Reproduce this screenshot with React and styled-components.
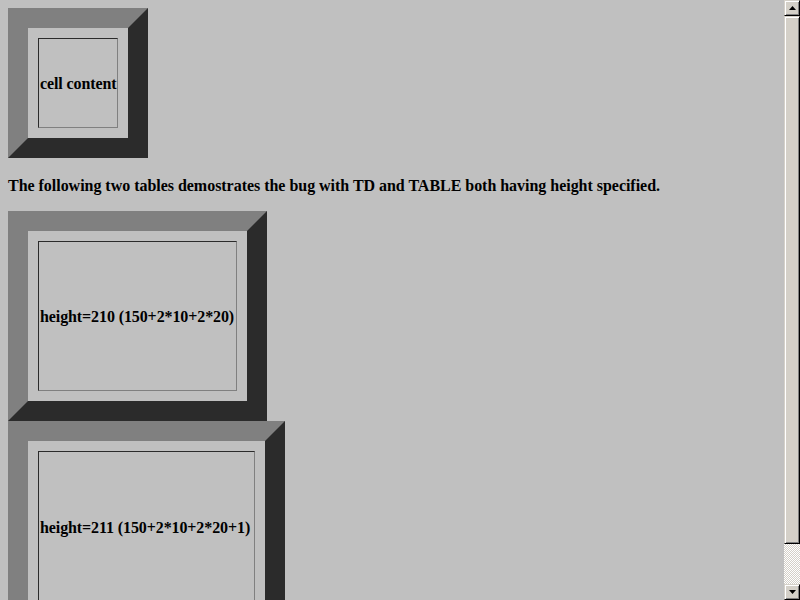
import React from 'react';
import styled, { createGlobalStyle } from 'styled-components';

const GlobalStyle = createGlobalStyle`
  html, body {
    margin: 0;
    padding: 0;
    overflow: hidden;
    background: #c0c0c0;
  }
  body {
    padding: 8px;
    font-family: "Liberation Serif", "Times New Roman", serif;
    font-size: 16px;
    font-weight: bold;
    color: #000;
  }
`;

const Page = styled.div`
  width: 776px;
`;

const Frame = styled.div`
  box-sizing: border-box;
  display: flex;
  width: ${p => p.w}px;
  height: ${p => p.h}px;
  padding: 10px;
  border: 20px solid;
  border-color: #808080 #2b2b2b #2b2b2b #808080;
`;

const Cell = styled.div`
  display: flex;
  align-items: center;
  flex: 1;
  min-width: 0;
  padding: 3px 0 1px 1px;
  border: 1px solid;
  border-color: #2b2b2b #808080 #808080 #2b2b2b;
  white-space: nowrap;
  line-height: 18px;
  letter-spacing: -0.1px;
`;

const Note = styled.p`
  margin: 19px 0 16px;
  line-height: 18px;
  letter-spacing: -0.03px;
`;

const Scrollbar = styled.div`
  position: fixed;
  top: 0;
  right: 0;
  width: 16px;
  height: 600px;
  display: flex;
  flex-direction: column;
  background-color: #fff;
  background-image: conic-gradient(#d4d0c8 25%, #fff 0 50%, #d4d0c8 0 75%, #fff 0);
  background-size: 2px 2px;
`;

const Bevel = styled.div`
  box-sizing: border-box;
  display: flex;
  align-items: center;
  justify-content: center;
  width: 16px;
  height: ${p => p.h}px;
  background: #d4d0c8;
  border-top: 1px solid #d4d0c8;
  border-left: 1px solid #d4d0c8;
  border-right: 1px solid #000;
  border-bottom: 1px solid #000;
  box-shadow: inset 1px 1px 0 #fff, inset -1px -1px 0 #808080;
`;

const Track = styled.div`
  flex: 1;
`;

function Arrow({ down }) {
  return (
    <svg width="7" height="4" viewBox="0 0 7 4">
      <path d={down ? 'M0 0H7L3.5 4Z' : 'M3.5 0L7 4H0Z'} fill="#000" />
    </svg>
  );
}

export default function App() {
  return (
    <Page>
      <GlobalStyle />
      <Frame w={140} h={150}>
        <Cell>cell content</Cell>
      </Frame>
      <Note>
        The following two tables demostrates the bug with TD and TABLE both
        having height specified.
      </Note>
      <Frame w={259} h={210}>
        <Cell>height=210 (150+2*10+2*20)</Cell>
      </Frame>
      <Frame w={277} h={211}>
        <Cell>height=211 (150+2*10+2*20+1)</Cell>
      </Frame>
      <Scrollbar>
        <Bevel h={16}>
          <Arrow />
        </Bevel>
        <Bevel h={528} />
        <Track />
        <Bevel h={16}>
          <Arrow down />
        </Bevel>
      </Scrollbar>
    </Page>
  );
}
